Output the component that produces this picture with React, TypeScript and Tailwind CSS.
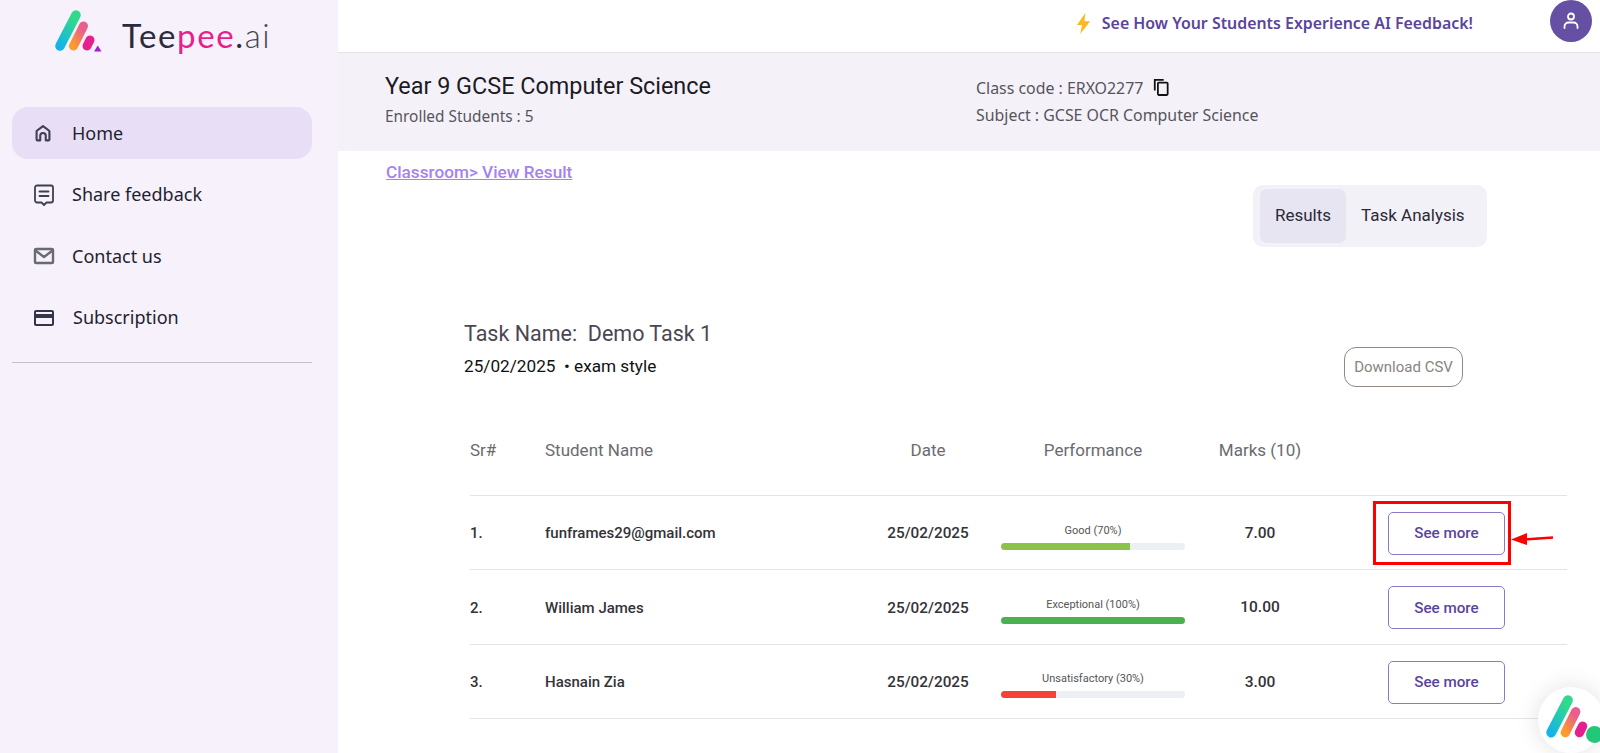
import { MdCreditCard } from "react-icons/md";

const rows = [
    { sr: "1.", name: "funframes29@gmail.com", label: "Good (70%)", pct: "w-[70%]", color: "bg-[#8bc34a]", marks: "7.00", marked: true },
    { sr: "2.", name: "William James", label: "Exceptional (100%)", pct: "w-full", color: "bg-[#4caf50]", marks: "10.00", marked: false },
    { sr: "3.", name: "Hasnain Zia", label: "Unsatisfactory (30%)", pct: "w-[30%]", color: "bg-[#f44336]", marks: "3.00", marked: false },
];

function LogoBars({ id }: { id: string }) {
    return (
        <>
            <defs>
                <linearGradient id={`${id}a`} x1="0" y1="1" x2="0.6" y2="0">
                    <stop offset="0" stopColor="#14b4e6" />
                    <stop offset="1" stopColor="#30d98c" />
                </linearGradient>
                <linearGradient id={`${id}b`} x1="0" y1="1" x2="0.6" y2="0">
                    <stop offset="0" stopColor="#fb9d2a" />
                    <stop offset="1" stopColor="#e85f8e" />
                </linearGradient>
            </defs>
            <path d="M5 33L21 2" stroke={`url(#${id}a)`} strokeWidth="9.5" strokeLinecap="round" fill="none" />
            <path d="M18.5 33L28.5 13" stroke={`url(#${id}b)`} strokeWidth="9" strokeLinecap="round" fill="none" />
            <path d="M32 33L35 27" stroke="#e61f90" strokeWidth="9" strokeLinecap="round" fill="none" />
        </>
    );
}

function HomeIcon() {
    return (
        <svg viewBox="0 0 24 24" className="w-[22px] h-[22px]" fill="none" stroke="#3f3f50" strokeWidth="2.3" strokeLinejoin="round">
            <path d="M5 19V10.5a1.5 1.5 0 0 1 .6-1.2L12 4.5l6.4 4.8a1.5 1.5 0 0 1 .6 1.2V19a1 1 0 0 1-1 1h-3v-5a3 3 0 0 0-6 0v5H6a1 1 0 0 1-1-1z" />
        </svg>
    );
}

function FeedbackIcon() {
    return (
        <svg viewBox="0 0 24 24" className="w-[24px] h-[24px]" fill="none" stroke="#3f3f50" strokeWidth="1.8" strokeLinejoin="round" strokeLinecap="round">
            <path d="M5 2.5h14a2 2 0 0 1 2 2v13a2 2 0 0 1-2 2h-4.5L12 22l-2.5-2.5H5a2 2 0 0 1-2-2v-13a2 2 0 0 1 2-2z" />
            <path d="M7.5 8.5h9M7.5 13h9" />
        </svg>
    );
}

function MailIcon() {
    return (
        <svg viewBox="0 0 24 24" className="w-[24px] h-[24px]" fill="none" stroke="#6a6a72" strokeWidth="2.4" strokeLinejoin="round">
            <rect x="3" y="5" width="18" height="14" rx="1" />
            <path d="M3.5 6.5l8.5 6.5 8.5-6.5" />
        </svg>
    );
}

function CopyIcon() {
    return (
        <svg viewBox="0 0 18 20" className="ml-[10px] w-[16px] h-[18px] mb-[3px]" fill="none" stroke="#111" strokeWidth="2">
            <path d="M2 14V2h10" />
            <rect x="5.5" y="5" width="11" height="14" rx="1" />
        </svg>
    );
}

const navItems = [
    { label: "Home", icon: <HomeIcon />, active: true, extra: "" },
    { label: "Share feedback", icon: <FeedbackIcon />, active: false, extra: "" },
    { label: "Contact us", icon: <MailIcon />, active: false, extra: "" },
    { label: "Subscription", icon: <MdCreditCard className="w-[24px] h-[24px] text-[#34344a]" />, active: false, extra: "pl-[1px]" },
];

function Sidebar() {
    return (
        <aside className="w-[338px] shrink-0 bg-[#f6f1fa] pl-3 pr-[26px] font-['Noto_Sans',sans-serif]">
            <div className="flex items-center h-[107px] pb-[36px] pl-[43px]">
                <svg viewBox="0 0 46 40" className="w-[46px] h-[40px] mt-[-6px] overflow-visible">
                    <LogoBars id="side" />
                    <path d="M39 38.5h7.5l-3.75-6z" fill="#a21fd0" />
                </svg>
                <span className="ml-[21px] text-[33px] tracking-[1.6px] font-['Lato',sans-serif] text-[#2b2b3d]">
                    Tee<span className="text-[#e91e8c]">pee</span>.<span className="font-light text-[#44444f]">ai</span>
                </span>
            </div>
            <nav className="flex flex-col gap-[9.6px]">
                {navItems.map((item) => (
                    <div key={item.label} className={`flex items-center h-[52px] pl-[20px] rounded-2xl text-[18px] text-[#1f1f30] ${item.active ? "bg-[#e8dff6]" : ""}`}>
                        <span className="w-[40px] flex">{item.icon}</span>
                        <span className={item.extra}>{item.label}</span>
                    </div>
                ))}
            </nav>
            <hr className="mt-[18px] border-t border-[#c5c0ca]" />
        </aside>
    );
}

function ResultRow({ row }: { row: (typeof rows)[number] }) {
    return (
        <div className="grid grid-cols-[75px_313px_140px_190px_144px_1fr] items-center h-[74.33px] pt-[2px] border-t border-[#e4e4e7] text-[15px] font-medium text-[#333338]">
            <span>{row.sr}</span>
            <span>{row.name}</span>
            <span className="text-center text-[15.3px]">25/02/2025</span>
            <div className="flex flex-col items-center pt-[6px]">
                <span className="text-[11px] font-normal text-[#555] leading-[14px] mb-[5px]">{row.label}</span>
                <div className="w-[184px] h-[7px] rounded-sm bg-[#eceff3] overflow-hidden">
                    <div className={`h-full ${row.pct} ${row.color}`} />
                </div>
            </div>
            <span className="text-center text-[15.5px]">{row.marks}</span>
            <div className="pl-[56px] relative">
                <button className="w-[117px] h-[43px] rounded-[5px] border border-[#8d78c6] text-[#5b459c] text-[15.2px] font-medium">See more</button>
                {row.marked && (
                    <>
                        <div className="absolute left-[41px] top-[-11px] w-[138px] h-[64px] border-[3px] border-[#ff0000]" />
                        <svg viewBox="0 0 44 14" className="absolute left-[178px] top-[20px] w-[44px] h-[14px]">
                            <path d="M14 7.5L43 5.5" stroke="#f00" strokeWidth="2.4" />
                            <path d="M1 7.5L17 1V13z" fill="#f00" />
                        </svg>
                    </>
                )}
            </div>
        </div>
    );
}

export default function App() {
    return (
        <div className="relative flex h-screen overflow-hidden bg-white font-['Roboto',sans-serif]">
            <Sidebar />
            <main className="flex-1 flex flex-col min-w-0">
                <header className="flex items-start justify-end h-[53px] border-b border-[#e6e3ea] pr-[8px]">
                    <div className="flex items-center h-[47px] mr-[77px] font-['Noto_Sans',sans-serif] text-[15.9px] font-semibold text-[#5b459c]">
                        <svg viewBox="0 0 18 22" className="w-[17px] h-[21px] mr-[10px]">
                            <path d="M11 0L2 12.5h5.5L5.5 22 16 8.5h-6z" fill="#fbb81f" />
                        </svg>
                        See How Your Students Experience AI Feedback!
                    </div>
                    <div className="w-[42px] h-[42px] rounded-full bg-[#6550a3] flex items-center justify-center">
                        <svg viewBox="0 0 24 24" className="w-[24px] h-[24px]" fill="none" stroke="#fff" strokeWidth="1.8" strokeLinecap="round">
                            <circle cx="12" cy="7.5" r="3" />
                            <path d="M5.5 19v-1.5a4 4 0 0 1 4-4h5a4 4 0 0 1 4 4V19" />
                        </svg>
                    </div>
                </header>
                <section className="flex h-[98px] bg-[#f5f1f9] pl-[47px] pt-[17px]">
                    <div className="w-[591px]">
                        <h1 className="text-[23.4px] leading-[32px] text-[#1b1b24]">Year 9 GCSE Computer Science</h1>
                        <p className="mt-[3px] text-[15.4px] leading-[24px] text-[#55555c] font-['Noto_Sans',sans-serif]">Enrolled Students : 5</p>
                    </div>
                    <div className="text-[15.9px] leading-[27px] text-[#55555c] font-['Noto_Sans',sans-serif] pt-[5px]">
                        <p className="flex items-center">
                            Class code : ERXO2277
                            <CopyIcon />
                        </p>
                        <p>Subject : GCSE OCR Computer Science</p>
                    </div>
                </section>
                <div className="pl-[48px] pt-[9px]">
                    <a className="underline text-[17.2px] leading-[24px] font-medium text-[#a582f0]">Classroom&gt; View Result</a>
                </div>
                <div className="flex justify-end pr-[113px]">
                    <div className="flex w-[234px] h-[62px] p-[4px] pl-[7px] rounded-[10px] bg-[#f2f1f7] text-[17px] text-[#2a2a38]">
                        <div className="flex items-center justify-center w-[86px] rounded-[7px] bg-[#e8e5f2]">Results</div>
                        <div className="flex items-center pl-[15px]">Task Analysis</div>
                    </div>
                </div>
                <section className="pl-[126px] pr-[137px] flex justify-between items-start mt-[72px]">
                    <div>
                        <h2 className="text-[21.5px] leading-[30px] text-[#4a4753]">Task Name:&nbsp; Demo Task 1</h2>
                        <p className="mt-[5px] text-[17.2px] leading-[24px] text-[#111]">25/02/2025 &nbsp;• exam style</p>
                    </div>
                    <button className="mt-[28px] w-[119px] h-[40px] rounded-[12px] border border-[#8f8a86] text-[15px] text-[#8a8480]">Download CSV</button>
                </section>
                <section className="pl-[132px] pr-[33px] mt-[38px]">
                    <div className="grid grid-cols-[75px_313px_140px_190px_144px_1fr] items-center h-[70px] pb-[18px] text-[17px] text-[#6b6b70]">
                        <span>Sr#</span>
                        <span>Student Name</span>
                        <span className="text-center">Date</span>
                        <span className="text-center">Performance</span>
                        <span className="text-center">Marks (10)</span>
                        <span />
                    </div>
                    {rows.map((row) => (
                        <ResultRow key={row.sr} row={row} />
                    ))}
                    <div className="border-t border-[#e4e4e7]" />
                </section>
            </main>
            <button className="absolute right-[-4px] bottom-0 w-[66px] h-[66px] rounded-full bg-white shadow-[0_0_24px_rgba(0,0,0,0.12)]">
                <svg viewBox="0 0 46 40" className="absolute left-[8px] top-[11px] w-[48px] h-[42px] overflow-visible">
                    <LogoBars id="fab" />
                </svg>
                <span className="absolute left-[48px] top-[39px] w-[17px] h-[17px] rounded-full bg-[#22c77a]" />
            </button>
        </div>
    );
}
